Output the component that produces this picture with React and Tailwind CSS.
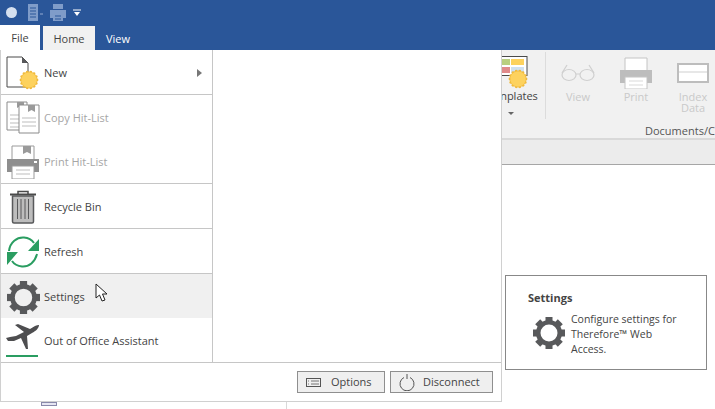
const FONT = "font-['Open_Sans','Noto_Sans',sans-serif]"

const GEAR_TEETH = [0, 45, 90, 135, 180, 225, 270, 315]

const Gear = ({ size = 32, color = '#58595b' }) => (
  <svg width={size} height={size} viewBox="0 0 32 32">
    {GEAR_TEETH.map(a => (
      <rect key={a} x="12.5" y="0" width="7" height="7" fill={color} transform={`rotate(${a} 16 16)`} />
    ))}
    <circle cx="16" cy="16" r="10.75" fill="none" stroke={color} strokeWidth="4.5" />
  </svg>
)

const Seal = ({ cx, cy, r }) => {
  const dots = Array.from({ length: 14 }, (_, i) => (i * Math.PI * 2) / 14)
  return (
    <g>
      {dots.map(a => (
        <circle key={a} cx={cx + r * Math.cos(a)} cy={cy + r * Math.sin(a)} r="1.4" fill="#f0b93a" />
      ))}
      <circle cx={cx} cy={cy} r={r} fill="#fdd25e" stroke="#f0b93a" strokeWidth="0.6" />
    </g>
  )
}

const NewIcon = () => (
  <svg width="34" height="34" viewBox="0 0 34 34">
    <path d="M1 1H16L22 7V31H1Z" fill="#fff" stroke="#4a4a4a" strokeWidth="1" />
    <path d="M16 1L22 7H16Z" fill="#58595b" />
    <Seal cx={23} cy={24} r={8} />
  </svg>
)

const CopyIcon = () => (
  <svg width="34" height="34" viewBox="0 0 34 34" fill="none">
    <path d="M1 1H21V29H1Z" fill="#fff" stroke="#8b8b8b" />
    <path d="M4 14H18M4 18H18M4 22H18M4 26H18" stroke="#bdbdbd" />
    <path d="M11 1H18V7L14.500 5L11 7Z" fill="#9a9a9a" />
    <path d="M13 4H33V32H13Z" fill="#fff" stroke="#8b8b8b" />
    <path d="M16 17H30M16 21H30M16 25H30" stroke="#bdbdbd" />
    <path d="M22 4H29V11L25.500 9L22 11Z" fill="#9a9a9a" />
  </svg>
)

const PrintIcon = () => (
  <svg width="34" height="34" viewBox="0 0 34 34">
    <path d="M6 1H28V16H6Z" fill="#fff" stroke="#9a9a9a" />
    <path d="M17 1H25V9L21 7L17 9Z" fill="#9a9a9a" />
    <path d="M1 14H33V27H1Z" fill="#8e8e8e" />
    <rect x="28" y="16" width="3" height="2" fill="#fff" />
    <path d="M6 21H28V34H6Z" fill="#fff" stroke="#9a9a9a" />
    <path d="M10 25H24M10 29H24" stroke="#bdbdbd" />
  </svg>
)

const TrashIcon = () => (
  <svg width="26" height="34" viewBox="0 0 26 34" fill="none">
    <path d="M8 4V1.500H18V4" stroke="#4a4a4a" strokeWidth="1.5" />
    <path d="M0 4.500H26" stroke="#4a4a4a" strokeWidth="2" />
    <path d="M2.500 6H23.500V31.500Q23.500 33 22 33H4Q2.500 33 2.500 31.500Z" fill="#bdbdbd" stroke="#58595b" strokeWidth="1.500" />
    <path d="M7.500 9V29M11 9V29M15 9V29M18.500 9V29" stroke="#58595b" />
  </svg>
)

const RefreshIcon = () => (
  <svg width="34" height="32" viewBox="0 0 34 32" fill="none">
    <path d="M3 15C4 6 11 1 18 1.500C23 1.800 26 4 28 7" stroke="#2a9d61" strokeWidth="2" />
    <path d="M33 3V15H22Z" fill="#2a9d61" />
    <path d="M31 18C29 26 23 31 16 30.500C11 30 8 28 6 25" stroke="#2a9d61" strokeWidth="2" />
    <path d="M1 16H12L1 29Z" fill="#2a9d61" />
  </svg>
)

const PlaneIcon = () => (
  <svg width="34" height="34" viewBox="0 0 34 34">
    <path d="M33 1C33 4 30 7 26 9L21 12L22 25L20 25L15 14L8 17L2 17L0 14L4 13L10 12L18 8L9 1L12 0L24 5L29 2C31 1 32 1 33 1Z" fill="#4e4e50" />
    <rect x="0" y="31" width="32" height="2" fill="#2a9d61" />
  </svg>
)

const MENU_GROUPS = [
  { rows: [{ label: 'New', icon: <NewIcon />, arrow: true }] },
  {
    rows: [
      { label: 'Copy Hit-List', icon: <CopyIcon />, disabled: true },
      { label: 'Print Hit-List', icon: <PrintIcon />, disabled: true },
    ],
  },
  { rows: [{ label: 'Recycle Bin', icon: <TrashIcon /> }] },
  { rows: [{ label: 'Refresh', icon: <RefreshIcon /> }] },
]

const MenuRow = ({ label, icon, arrow, disabled, active }) => (
  <div className={`flex h-11 items-center pt-[2px] ${active ? 'bg-[#f0f0f0]' : ''}`}>
    <div className="flex w-[43px] shrink-0 justify-center pl-[5px] pr-[4px]">{icon}</div>
    <span className={`text-[11px] ${disabled ? 'text-[#a6a6a6]' : 'text-[#444444]'}`}>{label}</span>
    {arrow && <span className="ml-auto mr-[10px] h-0 w-0 border-y-[4px] border-l-[5px] border-y-transparent border-l-[#777777]" />}
  </div>
)

const RibbonTool = ({ label, children, w }) => (
  <div className={`flex flex-col items-center text-[11px] leading-[11px] text-[#c9c9c9] ${w}`}>
    <div className="flex h-[34px] items-center">{children}</div>
    <span className="mt-px text-center">{label}</span>
  </div>
)

export default function App() {
  return (
    <div className={`relative h-[409px] w-[715px] overflow-hidden bg-white ${FONT}`}>
      {/* Title bar + tabs */}
      <div className="h-[50px] bg-[#2a5699]">
        <div className="flex h-[25px] items-center pl-[6px]">
          <span className="h-[11px] w-[11px] rounded-full bg-[#d5e0f0]" />
          <svg width="16" height="17" viewBox="0 0 16 17" className="ml-[11px]">
            <path d="M0 0H10V17H0Z" fill="#7f9cc9" />
            <path d="M2 4H8M2 7H8M2 10H8M2 13H8" stroke="#2a5699" />
            <rect x="12" y="9" width="3" height="2" fill="#5f80b5" />
          </svg>
          <svg width="16" height="17" viewBox="0 0 16 17" className="ml-[6px]">
            <path d="M3 0H13V5H3Z" fill="#7f9cc9" />
            <path d="M0 6H16V14H13V17H3V14H0Z" fill="#7f9cc9" />
            <path d="M5 12H11M5 15H11" stroke="#2a5699" />
          </svg>
          <svg width="8" height="8" viewBox="0 0 8 8" className="ml-[7px]">
            <path d="M0 1H8" stroke="#fff" />
            <path d="M1 3H7L4 7Z" fill="#fff" />
          </svg>
        </div>
        <div className="flex h-[25px] items-end text-[11px] font-medium">
          <div className="flex h-[25px] w-[40px] items-center justify-center bg-white pt-[2px] text-[#444444]">File</div>
          <div className="ml-[3px] flex h-[24px] w-[52px] items-center justify-center bg-[#f1f1f1] pt-[3px] text-[#444444]">Home</div>
          <div className="ml-[11px] flex h-[24px] items-center pt-[3px] text-white">View</div>
        </div>
      </div>

      {/* Ribbon */}
      <div className="flex h-[90px] justify-end border-b-2 border-[#d9d9d9] bg-[#f1f1f1]">
        <div className="relative flex w-[214px] items-start pt-[6px]">
          <div className="flex w-[44px] flex-col items-center text-[11px] text-[#444444]">
            <svg width="27" height="34" viewBox="0 0 27 34" className="self-start">
              <rect x="0" y="0.500" width="26" height="19" fill="#fff" stroke="#4a4a4a" />
              <rect x="0" y="3" width="9" height="6" fill="#b9cf7f" />
              <rect x="10" y="3" width="13" height="6" fill="#fdd25e" />
              <rect x="0" y="11" width="9" height="6" fill="#e08a8a" />
              <rect x="10" y="11" width="13" height="6" fill="#cfe0f0" />
              <Seal cx={17} cy={23} r={8} />
            </svg>
            <span className="-mt-[2px] -ml-[8px] leading-[16px]">nplates</span>
            <span className="ml-[7px] mt-[8px] h-0 w-0 self-start border-x-[3px] border-t-[3px] border-x-transparent border-t-[#666666]" />
          </div>
          <div className="mt-[-4px] h-[67px] w-px bg-[#dcdcdc]" />
          <div className="flex gap-[24px] pl-[15px]">
            <RibbonTool label="View" w="w-[34px]">
              <svg width="34" height="18" viewBox="0 0 34 18" fill="none" stroke="#cfcfcf" strokeWidth="1.200">
                <ellipse cx="8" cy="11" rx="7" ry="5.500" />
                <ellipse cx="26" cy="11" rx="7" ry="5.500" />
                <path d="M15 10H19M1 9L6 1M33 9L28 1" />
              </svg>
            </RibbonTool>
            <RibbonTool label="Print" w="w-[34px]">
              <svg width="32" height="32" viewBox="0 0 32 32">
                <path d="M5 1H27V15H5Z" fill="#fff" stroke="#c4c4c4" />
                <path d="M0 13H32V26H0Z" fill="#bdbdbd" />
                <path d="M5 20H27V32H5Z" fill="#fff" stroke="#c4c4c4" />
                <path d="M9 24H23M9 28H23" stroke="#d9d9d9" />
              </svg>
            </RibbonTool>
            <RibbonTool label="Index Data" w="w-[32px]">
              <svg width="32" height="20" viewBox="0 0 32 20">
                <rect x="1" y="1" width="30" height="18" fill="#fff" stroke="#bdbdbd" strokeWidth="2" />
                <path d="M2 9H30" stroke="#cfcfcf" />
              </svg>
            </RibbonTool>
          </div>
          <span className="absolute bottom-0 left-[144px] whitespace-nowrap text-[11px] leading-[14px] text-[#555555]">Documents/C</span>
        </div>
      </div>

      {/* Grey band */}
      <div className="h-[25px] border-b border-[#a6a6a6] bg-[#ececec]" />

      {/* Content area */}
      <div className="relative h-[244px]">
        <div className="ml-[286px] h-full border-l border-[#d9d9d9]" />
        <div className="absolute left-[505px] top-[110px] h-[95px] w-[202px] border border-[#888888] bg-white pl-[22px] pt-[15px]">
          <div className="text-[11px] font-bold leading-[14px] text-[#444444]">Settings</div>
          <div className="mt-[7px] flex">
            <div className="ml-[5px] mr-[6px] mt-[5px] shrink-0">
              <Gear size={32} />
            </div>
            <p className="w-[112px] text-[10.5px] leading-[15px] text-[#444444]">
              Configure settings for Therefore™ Web Access.
            </p>
          </div>
        </div>
      </div>

      {/* File menu */}
      <div className="absolute left-0 top-[50px] flex h-[352px] w-[502px] flex-col border-b border-l border-r border-[#d0d0d0] bg-white">
        <div className="flex h-[313px] border-b border-[#c6c6c6]">
          <div className="w-[212px] border-r border-[#c6c6c6]">
            {MENU_GROUPS.map(group => (
              <div key={group.rows[0].label} className="border-b border-[#c6c6c6]">
                {group.rows.map(row => (
                  <MenuRow key={row.label} {...row} />
                ))}
              </div>
            ))}
            <MenuRow label="Settings" icon={<Gear size={33} />} active />
            <MenuRow label="Out of Office Assistant" icon={<PlaneIcon />} />
          </div>
        </div>
        <div className="flex flex-1 items-start justify-end gap-[5px] pr-[8px] pt-[8px] text-[11px] text-[#444444]">
          <button className="flex h-[22px] w-[88px] items-center gap-[10px] border border-[#8f8f8f] bg-[#efefef] pl-[8px]">
            <svg width="15" height="9" viewBox="0 0 15 9" fill="none" stroke="#555555">
              <rect x="0.500" y="0.500" width="14" height="8" />
              <path d="M2 3H3M5 3H13M2 6H3M5 6H13" strokeWidth="0.800" />
            </svg>
            Options
          </button>
          <button className="flex h-[22px] w-[103px] items-center gap-[8px] border border-[#8f8f8f] bg-[#efefef] pl-[8px]">
            <svg width="16" height="17" viewBox="0 0 16 17" fill="none" stroke="#555555">
              <path d="M5 3.500A7 7 0 1 0 11 3.500M8 0V5" />
            </svg>
            Disconnect
          </button>
        </div>
      </div>

      {/* Cursor */}
      <svg width="14" height="20" viewBox="0 0 14 20" className="absolute left-[95px] top-[283px]">
        <path d="M1 1V15L4.500 12L7 18L10 17L7.500 11H12Z" fill="#fff" stroke="#222222" strokeWidth="1" />
      </svg>

      {/* Sliver of a tree icon poking out under the menu */}
      <div className="absolute left-[41px] top-[402px] h-[4px] w-[16px] border border-[#8888aa] bg-[#e6e6f2]" />
    </div>
  )
}
